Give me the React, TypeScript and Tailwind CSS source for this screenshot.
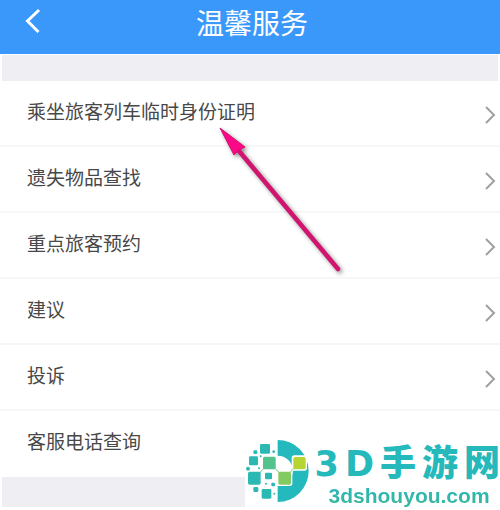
const services = [
  "乘坐旅客列车临时身份证明",
  "遗失物品查找",
  "重点旅客预约",
  "建议",
  "投诉",
  "客服电话查询",
];

function Header() {
  return (
    <header className="relative flex h-[54px] items-start justify-center bg-[#3b98fb] pt-1 text-white">
      <button type="button" aria-label="返回" className="absolute left-5 top-1 p-1">
        <svg width="20" height="26" viewBox="0 0 20 26" fill="none" stroke="currentColor" strokeWidth="3">
          <path d="M15 2 3.500 13 14.500 24" />
        </svg>
      </button>
      <h1 className="pl-1 text-[28px] leading-9">温馨服务</h1>
    </header>
  );
}

function ServiceRow({ label }: { label: string }) {
  return (
    <li className="border-b-2 border-[#f7f7f8] last:border-white">
      <a href="#" className="flex h-16 items-center justify-between pl-[27px] pr-1">
        <span className="pb-1 text-[19px] leading-7 text-[#484848]">{label}</span>
        <svg className="mt-1" width="12" height="20" viewBox="0 0 12 20" fill="none" stroke="#a0a0a0" strokeWidth="2">
          <path d="m2 2 8 8-8 8" />
        </svg>
      </a>
    </li>
  );
}

function PointerArrow() {
  return (
    <svg
      aria-hidden="true"
      className="pointer-events-none absolute left-[210px] top-[120px] drop-shadow-[2px_2px_2px_rgba(0,0,0,0.45)]"
      width="140"
      height="156"
      viewBox="0 0 140 156"
    >
      <path d="M29 31 128 149" stroke="#d0146f" strokeWidth="4.500" strokeLinecap="round" />
      <path d="M10 8 35 27 29 30 24 35Z" fill="#fa0888" stroke="#d0106f" strokeWidth="1" />
    </svg>
  );
}

function LogoMark() {
  return (
    <svg aria-hidden="true" className="shrink-0" width="66" height="66" viewBox="42 27 198 198">
      <path d="M140 33a93 93 0 0 1 0 186v-48a45 45 0 0 0 0-91Z" fill="#24b9bd" />
      <path d="m70 147 45-45 46 44 44-44" fill="none" stroke="#fff" strokeWidth="9" />
      <rect x="182" y="79" width="46" height="46" rx="8" fill="#fff" />
      <rect x="137" y="123" width="47" height="48" rx="8" fill="#fff" />
      <path d="m70 147 45-45 46 44 44-44" fill="none" stroke="#79c77b" strokeWidth="3" />
      <g fill="#2cb9b4">
        <rect x="87" y="45" width="30" height="29" rx="4" />
        <rect x="54" y="82" width="27" height="27" rx="4" />
        <rect x="51" y="128" width="38" height="39" rx="5" />
        <rect x="102" y="131" width="21" height="20" rx="3" />
        <rect x="92" y="180" width="29" height="29" rx="4" />
        <rect x="67" y="174" width="15" height="15" rx="4" />
        <rect x="121" y="161" width="11" height="11" rx="3" />
        <rect x="67" y="64" width="12" height="11" rx="4" />
        <circle cx="51" cy="119" r="6" />
        <circle cx="128" cy="68" r="4" />
        <circle cx="89" cy="82" r="3" />
        <circle cx="84" cy="118" r="3" />
        <circle cx="105" cy="164" r="3" />
        <circle cx="130" cy="194" r="3" />
      </g>
      <rect x="96" y="83" width="38" height="38" rx="5" fill="#54c28c" />
      <rect x="142" y="128" width="38" height="39" rx="5" fill="#82cb60" />
      <rect x="187" y="84" width="37" height="37" rx="5" fill="#b6d532" />
    </svg>
  );
}

function SiteBadge() {
  return (
    <div className="absolute bottom-0 right-0 flex items-start bg-white pt-1">
      <LogoMark />
      <div className="flex flex-col pl-1 pt-1">
        <div className="flex items-center gap-[6px] pt-1 font-['Liberation_Sans','Noto_Sans_CJK_SC',sans-serif] text-[36px] font-black leading-9 text-[#25b9bb]">
          <span className="flex gap-[6px] font-['DejaVu_Sans'] text-[35px] font-bold">
            <span>3</span>
            <span>D</span>
          </span>
          <span>手</span>
          <span>游</span>
          <span>网</span>
        </div>
        <span className="bg-gradient-to-b from-[#24b6c0] to-[#3bb795] bg-clip-text pl-[14px] font-['Liberation_Sans'] text-[21px] font-bold leading-7 text-transparent">
          3dshouyou.com
        </span>
      </div>
    </div>
  );
}

export default function App() {
  return (
    <div className="relative min-h-screen bg-white font-['Noto_Sans_CJK_SC',sans-serif]">
      <Header />
      <main className="mx-[2px] mt-px bg-[#eeeef3] pb-[30px] pt-[26px]">
        <ul className="-mx-[2px] bg-white">
          {services.map((label) => (
            <ServiceRow key={label} label={label} />
          ))}
        </ul>
      </main>
      <PointerArrow />
      <SiteBadge />
    </div>
  );
}
